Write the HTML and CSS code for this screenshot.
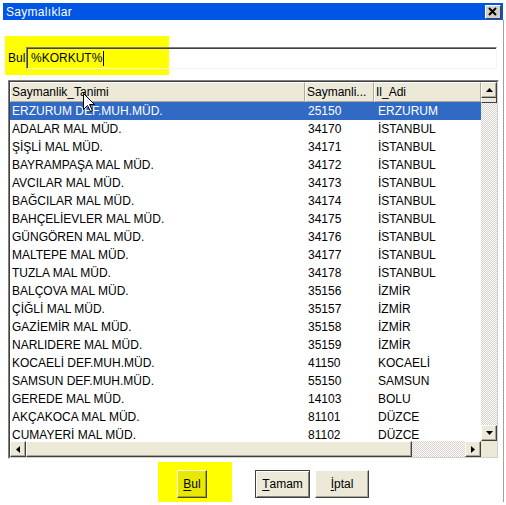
FILE: index.html
```html
<!DOCTYPE html>
<html>
<head>
<meta charset="utf-8">
<link rel="stylesheet" href="styles.css">
</head>
<body>
<div class="window">
  <div class="titlebar">
    <span class="title">Saymalıklar</span>
    <div class="close"><svg width="10" height="9" viewBox="0 0 10 9"><path d="M1 1 L8 8 M8 1 L1 8" stroke="#000" stroke-width="2"/></svg></div>
  </div>
  <div class="body">
    <div class="hl-search"></div>
    <div class="search">
      <span class="search-label">Bul</span>
      <div class="search-input"><span class="search-text">%KORKUT%</span><span class="caret"></span></div>
    </div>
    <div class="grid">
      <div class="grid-inner">
        <div class="grid-top">
          <div class="table">
            <div class="row head">
              <div class="hcell">Saymanlik_Tanimi</div>
              <div class="hcell">Saymanli...</div>
              <div class="hcell">Il_Adi</div>
            </div>
            <div class="rows">
              <div class="row sel"><div class="c1">ERZURUM DEF.MUH.MÜD.</div><div class="c2">25150</div><div class="c3">ERZURUM</div></div>
              <div class="row"><div class="c1">ADALAR MAL MÜD.</div><div class="c2">34170</div><div class="c3">İSTANBUL</div></div>
              <div class="row"><div class="c1">ŞİŞLİ MAL MÜD.</div><div class="c2">34171</div><div class="c3">İSTANBUL</div></div>
              <div class="row"><div class="c1">BAYRAMPAŞA MAL MÜD.</div><div class="c2">34172</div><div class="c3">İSTANBUL</div></div>
              <div class="row"><div class="c1">AVCILAR MAL MÜD.</div><div class="c2">34173</div><div class="c3">İSTANBUL</div></div>
              <div class="row"><div class="c1">BAĞCILAR MAL MÜD.</div><div class="c2">34174</div><div class="c3">İSTANBUL</div></div>
              <div class="row"><div class="c1">BAHÇELİEVLER MAL MÜD.</div><div class="c2">34175</div><div class="c3">İSTANBUL</div></div>
              <div class="row"><div class="c1">GÜNGÖREN MAL MÜD.</div><div class="c2">34176</div><div class="c3">İSTANBUL</div></div>
              <div class="row"><div class="c1">MALTEPE MAL MÜD.</div><div class="c2">34177</div><div class="c3">İSTANBUL</div></div>
              <div class="row"><div class="c1">TUZLA MAL MÜD.</div><div class="c2">34178</div><div class="c3">İSTANBUL</div></div>
              <div class="row"><div class="c1">BALÇOVA MAL MÜD.</div><div class="c2">35156</div><div class="c3">İZMİR</div></div>
              <div class="row"><div class="c1">ÇİĞLİ MAL MÜD.</div><div class="c2">35157</div><div class="c3">İZMİR</div></div>
              <div class="row"><div class="c1">GAZİEMİR MAL MÜD.</div><div class="c2">35158</div><div class="c3">İZMİR</div></div>
              <div class="row"><div class="c1">NARLIDERE MAL MÜD.</div><div class="c2">35159</div><div class="c3">İZMİR</div></div>
              <div class="row"><div class="c1">KOCAELİ DEF.MUH.MÜD.</div><div class="c2">41150</div><div class="c3">KOCAELİ</div></div>
              <div class="row"><div class="c1">SAMSUN DEF.MUH.MÜD.</div><div class="c2">55150</div><div class="c3">SAMSUN</div></div>
              <div class="row"><div class="c1">GEREDE MAL MÜD.</div><div class="c2">14103</div><div class="c3">BOLU</div></div>
              <div class="row"><div class="c1">AKÇAKOCA MAL MÜD.</div><div class="c2">81101</div><div class="c3">DÜZCE</div></div>
              <div class="row"><div class="c1">CUMAYERİ MAL MÜD.</div><div class="c2">81102</div><div class="c3">DÜZCE</div></div>
            </div>
          </div>
          <div class="vscroll">
            <div class="sbtn"><svg width="7" height="4" viewBox="0 0 7 4"><path d="M3.5 0 L7 4 L0 4 Z" fill="#000"/></svg></div>
            <div class="vthumb"></div>
            <div class="track"></div>
            <div class="sbtn"><svg width="7" height="4" viewBox="0 0 7 4"><path d="M0 0 L7 0 L3.5 4 Z" fill="#000"/></svg></div>
          </div>
        </div>
        <div class="hscroll">
          <div class="sbtn"><svg width="4" height="7" viewBox="0 0 4 7"><path d="M4 0 L4 7 L0 3.5 Z" fill="#000"/></svg></div>
          <div class="hthumb"></div>
          <div class="track"></div>
          <div class="sbtn"><svg width="4" height="7" viewBox="0 0 4 7"><path d="M0 0 L4 3.5 L0 7 Z" fill="#000"/></svg></div>
          <div class="corner"></div>
        </div>
      </div>
    </div>
    <div class="buttons">
      <div class="hl-btn"><div class="btn btn-yellow"><u>B</u>ul</div></div>
      <div class="btn btn-default"><u>T</u>amam</div>
      <div class="btn btn-cancel"><u>İ</u>ptal</div>
    </div>
    <svg class="cursor" width="13" height="20" viewBox="0 0 13 20"><path d="M0.5 0.5 L0.5 16.5 L4.5 12.5 L7.5 18.5 L9.5 17.5 L6.5 11.5 L11.5 11.5 Z" fill="#fff" stroke="#000" stroke-width="1"/></svg>
  </div>
</div>
</body>
</html>
```
FILE: styles.css
```css
* { box-sizing: border-box; }
html, body { margin: 0; padding: 0; background: #fff; }
body {
  font-family: "Liberation Sans", Arial, sans-serif;
  font-size: 12px;
  color: #000;
}
.window { margin: 3px 0 0 3px; width: 501px; }
.titlebar {
  width: 500px;
  height: 17px;
  background: #0055e5;
  color: #fff;
  display: flex;
  align-items: center;
  justify-content: space-between;
  padding: 0 2px 0 3px;
}
.title { font-size: 12px; letter-spacing: 0.3px; }
.close {
  width: 16px;
  height: 14px;
  background: #d4d0c8;
  border-top: 1px solid #fff;
  border-left: 1px solid #fff;
  border-right: 1px solid #404040;
  border-bottom: 1px solid #404040;
  display: flex;
  align-items: center;
  justify-content: center;
}
.body {
  position: relative;
  height: 482px;
  padding-top: 27px;
  border-right: 1px solid #a0a0a0;
}
.hl-search {
  position: absolute;
  left: 2px;
  top: 16px;
  width: 164px;
  height: 39px;
  background: #ffff00;
}
.search {
  position: relative;
  display: flex;
  align-items: center;
  padding-left: 5px;
  height: 22px;
}
.search-label { width: 18px; }
.search-input {
  width: 471px;
  height: 22px;
  border-top: 1px solid #808080;
  border-left: 1px solid #808080;
  border-right: 1px solid #f4f4ec;
  border-bottom: 1px solid #f4f4ec;
  box-shadow: inset 1px 1px 0 #404040;
  display: flex;
  align-items: center;
  padding-left: 4px;
}
.caret { width: 1px; height: 15px; background: #000; margin-left: 1px; }
.grid {
  margin: 11px 0 0 5px;
  width: 491px;
  height: 379px;
  border-top: 1px solid #808080;
  border-left: 1px solid #808080;
  border-right: 1px solid #fff;
  border-bottom: 1px solid #fff;
}
.grid-inner {
  height: 100%;
  border-top: 1px solid #404040;
  border-left: 1px solid #404040;
  border-right: 1px solid #d4d0c8;
  border-bottom: 1px solid #d4d0c8;
  display: flex;
  flex-direction: column;
}
.grid-top { display: flex; height: 359px; }
.table { width: 471px; overflow: hidden; display: flex; flex-direction: column; }
.row {
  display: grid;
  grid-template-columns: 295px 69px 107px;
  height: 18px;
  line-height: 18px;
  white-space: nowrap;
}
.row > div { overflow: hidden; }
.head { height: 20px; background: #ece9d8; flex: none; }
.hcell {
  border-top: 1px solid #fff;
  border-left: 1px solid #fff;
  border-right: 1px solid #aca899;
  border-bottom: 1px solid #aca899;
  padding-left: 1px;
  line-height: 18px;
}
.rows { flex: 1; overflow: hidden; }
.c1 { padding-left: 2px; }
.c2 { padding-left: 3px; }
.c3 { padding-left: 4px; }
.sel { background: #316ac5; color: #fff; }
.vscroll { width: 16px; display: flex; flex-direction: column; }
.sbtn {
  width: 16px;
  height: 16px;
  flex: none;
  background: #ece9d8;
  border-top: 1px solid #fff;
  border-left: 1px solid #fff;
  border-right: 1px solid #404040;
  border-bottom: 1px solid #404040;
  box-shadow: inset -1px -1px 0 #aca899;
  display: flex;
  align-items: center;
  justify-content: center;
}
.vthumb {
  height: 5px;
  flex: none;
  background: #ece9d8;
  border-left: 1px solid #fff;
  border-right: 1px solid #404040;
  border-bottom: 1px solid #404040;
}
.track {
  flex: 1;
  background: repeating-conic-gradient(#d4d0c8 0 25%, #fff 0 50%) 0 0 / 2px 2px;
}
.hscroll { display: flex; height: 16px; }
.hthumb {
  width: 386px;
  flex: none;
  background: #ece9d8;
  border-top: 1px solid #fff;
  border-left: 1px solid #fff;
  border-right: 1px solid #404040;
  border-bottom: 1px solid #404040;
  box-shadow: inset -1px -1px 0 #aca899;
}
.corner { width: 16px; flex: none; background: #ece9d8; }
.buttons {
  display: flex;
  align-items: flex-start;
  margin-top: 3px;
  padding-left: 155px;
}
.hl-btn {
  width: 74px;
  height: 42px;
  background: #ffff00;
  padding: 8px 0 0 19px;
}
.btn {
  height: 28px;
  display: flex;
  align-items: center;
  justify-content: center;
  background: #ece9d8;
  border-top: 1px solid #fff;
  border-left: 1px solid #fff;
  border-right: 1px solid #404040;
  border-bottom: 1px solid #404040;
  box-shadow: inset -1px -1px 0 #aca899;
  font-size: 12px;
}
.btn u { text-decoration-thickness: 1px; text-underline-offset: 2px; }
.btn-yellow { width: 30px; background: #e8e800; box-shadow: inset -1px -1px 0 #a8a800; }
.btn-default {
  width: 55px;
  margin: 8px 0 0 23px;
  border: 1px solid #404040;
  box-shadow: inset 1px 1px 0 #fff, inset -1px -1px 0 #808080;
}
.btn-cancel { width: 54px; margin: 8px 0 0 5px; }
.cursor { position: absolute; left: 80px; top: 73px; }
```
